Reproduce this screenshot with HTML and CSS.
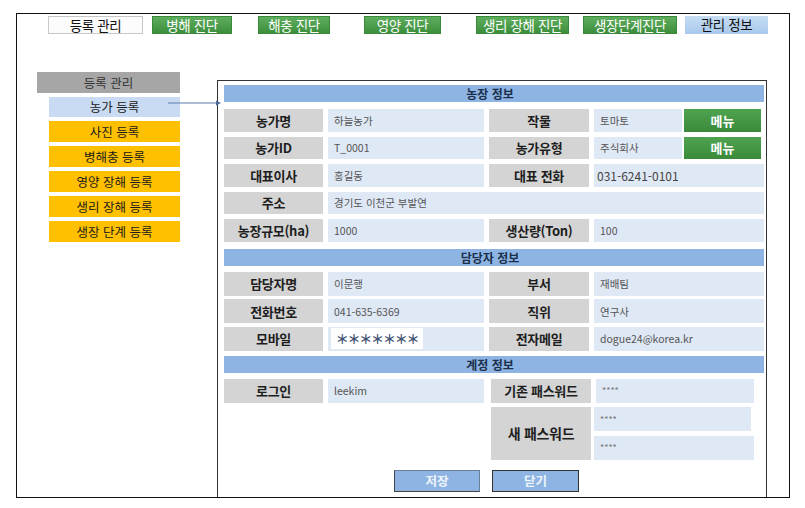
FILE: index.html
```html
<!DOCTYPE html>
<html lang="ko">
<head>
<meta charset="utf-8">
<title>관리 정보 - 농가 등록</title>
<link rel="stylesheet" href="styles.css">
</head>
<body>
<div class="frame">
  <nav class="topnav">
    <div class="tab tab-white n1">등록 관리</div>
    <div class="tab tab-green n2">병해 진단</div>
    <div class="tab tab-green n3">해충 진단</div>
    <div class="tab tab-green n4">영양 진단</div>
    <div class="tab tab-green n5">생리 장해 진단</div>
    <div class="tab tab-green n6">생장단계진단</div>
    <div class="tab tab-blue n7">관리 정보</div>
  </nav>
  <div class="main">
    <aside class="sidebar">
      <div class="side-head">등록 관리</div>
      <div class="side-item side-active">농가 등록</div>
      <div class="side-item side-yellow">사진 등록</div>
      <div class="side-item side-yellow">병해충 등록</div>
      <div class="side-item side-yellow">영양 장해 등록</div>
      <div class="side-item side-yellow">생리 장해 등록</div>
      <div class="side-item side-yellow">생장 단계 등록</div>
    </aside>
    <svg class="arrow" width="54" height="8" viewBox="0 0 54 8">
      <line x1="0" y1="4" x2="48" y2="4" stroke="#5b7fb0" stroke-width="1"/>
      <polygon points="48,1.5 53,4 48,6.5" fill="#4a6a98"/>
    </svg>
    <section class="panel">
      <div class="sec-head">농장 정보</div>
      <div class="grid g1">
        <div class="lab">농가명</div><div class="val">하늘농가</div>
        <div class="lab">작물</div>
        <div class="pair"><div class="val grow">토마토</div><div class="menu-btn">메뉴</div></div>
        <div class="lab">농가ID</div><div class="val">T_0001</div>
        <div class="lab">농가유형</div>
        <div class="pair"><div class="val grow">주식회사</div><div class="menu-btn">메뉴</div></div>
        <div class="lab">대표이사</div><div class="val">홍길동</div>
        <div class="lab">대표 전화</div><div class="val big">031-6241-0101</div>
        <div class="lab">주소</div><div class="val span3">경기도 이천군 부발연</div>
        <div class="lab">농장규모(ha)</div><div class="val">1000</div>
        <div class="lab">생산량(Ton)</div><div class="val">100</div>
      </div>
      <div class="sec-head sh2">담당자 정보</div>
      <div class="grid g2">
        <div class="lab">담당자명</div><div class="val">이문행</div>
        <div class="lab">부서</div><div class="val">재배팀</div>
        <div class="lab">전화번호</div><div class="val">041-635-6369</div>
        <div class="lab">직위</div><div class="val">연구사</div>
        <div class="lab">모바일</div><div class="val"><span class="mask">＊＊＊＊＊＊＊</span></div>
        <div class="lab">전자메일</div><div class="val">dogue24@korea.kr</div>
      </div>
      <div class="sec-head sh3">계정 정보</div>
      <div class="grid g3">
        <div class="lab r1">로그인</div><div class="val r1">leekim</div>
        <div class="lab lab-r r1">기존 패스워드</div><div class="val pw r1">****</div>
        <div class="lab lab-r tall">새 패스워드</div>
        <div class="val pw pw2">****</div>
        <div class="val pw pw3">****</div>
      </div>
      <div class="actions">
        <div class="act save">저장</div>
        <div class="act close">닫기</div>
      </div>
    </section>
  </div>
</div>
</body>
</html>
```

FILE: styles.css
```css
* { box-sizing: border-box; }
html, body { margin: 0; padding: 0; background: #fff; }
body {
  font-family: "Noto Sans CJK KR", "Noto Sans", sans-serif;
  color: #222;
}
.frame {
  margin: 13px 0 0 16px;
  width: 774px;
  height: 485px;
  border: 1px solid #111;
}
.topnav {
  display: flex;
  padding: 2px 0 0 31px;
  height: 20px;
}
.tab {
  height: 18px;
  font-size: 13.5px;
  line-height: 17px;
  text-align: center;
  letter-spacing: -0.4px;
}
.tab-white { background: #fcfcfc; border: 1px solid #c8c8c8; color: #111; }
.tab-green {
  background: linear-gradient(#5fae5f, #3c8e3c);
  color: #fff;
  border: 1px solid #3b8a3b;
}
.tab-blue { background: linear-gradient(#c6ddf4, #a9c9ec); color: #111; }
.n1 { width: 95px; }
.n2 { width: 80px; margin-left: 9px; }
.n3 { width: 72px; margin-left: 26px; }
.n4 { width: 77px; margin-left: 34px; }
.n5 { width: 93px; margin-left: 35px; }
.n6 { width: 94px; margin-left: 14px; }
.n7 { width: 83px; margin-left: 8px; }

.main {
  display: flex;
  position: relative;
  height: 463px;
}
.sidebar {
  margin: 38px 0 0 20px;
  width: 143px;
  display: flex;
  flex-direction: column;
  align-items: flex-end;
  gap: 4px;
}
.side-head {
  width: 143px;
  height: 21px;
  background: #a6a6a6;
  color: #333;
  font-size: 12.5px;
  line-height: 21px;
  text-align: center;
}
.side-item {
  width: 131px;
  height: 21px;
  font-size: 12.5px;
  line-height: 21px;
  text-align: center;
  color: #1a1a1a;
}
.side-active { background: #c9dbf2; height: 20px; line-height: 20px; }
.side-yellow { background: #ffc000; }
.arrow {
  position: absolute;
  left: 151px;
  top: 65px;
}

.panel {
  margin: 46px 0 0 37px;
  width: 550px;
  height: 417px;
  border: 1px solid #333;
  border-bottom: 0;
  padding: 4px 2px 0 6px;
}
.sec-head {
  height: 17px;
  background: #8db4e2;
  color: #1b2f4d;
  font-size: 12px;
  font-weight: 700;
  line-height: 17px;
  text-align: center;
  margin-bottom: 6px;
  padding-right: 8px;
}
.sh2 { margin-top: 7px; }
.sh3 { margin-top: 5px; }
.grid {
  display: grid;
  grid-template-columns: 99px 156px 100px 1fr;
  column-gap: 5px;
}
.g1 { grid-auto-rows: 22.5px; row-gap: 5px; margin-top: 7px; }
.g2 { grid-auto-rows: 24px; row-gap: 3.5px; }
.g3 { grid-template-rows: 24px 24px 24px; row-gap: 4.5px; }
.lab {
  background: #d4d4d4;
  font-size: 13px;
  font-weight: 700;
  color: #1e1e1e;
  display: flex;
  align-items: center;
  justify-content: center;
  letter-spacing: -0.3px;
}
.val {
  background: #dfe8f5;
  font-size: 10.5px;
  color: #555;
  display: flex;
  align-items: center;
  padding-left: 6px;
}
.val.big { font-size: 12px; padding-left: 3px; color: #444; }
.span3 { grid-column: 2 / 5; }
.pair { display: flex; gap: 2px; padding-right: 3px; }
.grow { flex: 1; }
.menu-btn {
  width: 77px;
  background: linear-gradient(#4fa34f, #3a8a3a);
  color: #fff;
  font-size: 13px;
  font-weight: 700;
  display: flex;
  align-items: center;
  justify-content: center;
}
.mask {
  background: #fff;
  width: 92px;
  height: 21px;
  margin-left: -3px;
  display: flex;
  align-items: center;
  justify-content: center;
  color: #3f5272;
  font-size: 13px;
  font-weight: 700;
  letter-spacing: -1.2px;
}
.r1 { grid-row: 1; }
.lab-r { grid-column: 3; margin-left: 2px; margin-right: -2px; }
.tall { grid-row: 2 / 4; font-size: 14px; }
.pw { grid-column: 4; font-size: 9px; color: #777; margin-right: 10px; }
.r1.pw { margin-left: 2px; }
.pw2 { grid-row: 2; margin-right: 13px; }
.pw3 { grid-row: 3; }
.actions {
  display: flex;
  gap: 12px;
  margin: 10px 0 0 170px;
}
.act {
  width: 86px;
  height: 22px;
  background: #8db4e2;
  color: #eef4fb;
  font-size: 12.5px;
  font-weight: 700;
  display: flex;
  align-items: center;
  justify-content: center;
  border: 1px solid #6b7f99;
}
.save { border-left-color: #444; border-bottom-color: #444; }
.close { width: 87px; border-color: #333; }
```
